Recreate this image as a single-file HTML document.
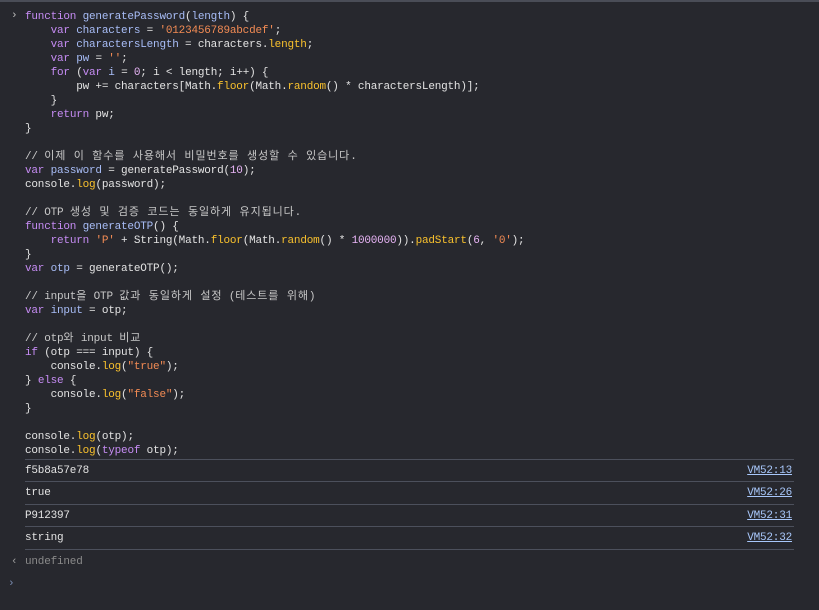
<!DOCTYPE html>
<html><head><meta charset="utf-8"><style>
html,body{margin:0;padding:0;background:#27282e;width:819px;height:610px;overflow:hidden}
body{border-top:2px solid #4a4d57;box-sizing:border-box;font-family:"Liberation Mono","Noto Sans CJK KR",monospace;font-size:11px;letter-spacing:-0.2px;color:#e3e3e3;position:relative}
.code{position:absolute;left:25px;top:8px;white-space:pre;line-height:14px}
.k{color:#c68cf4}.v{color:#a8bdf7}.s{color:#f28b54}.p{color:#f9c12d}.n{color:#e8b4f6}.c{color:#c8c8c8}
.h{letter-spacing:0.9px}
.arrow{position:absolute;left:11px;color:#bbb;font-size:11px}
.row{position:absolute;left:25px;width:769px;height:22px;border-top:1px solid #4c505c;line-height:22px}
.row .l{position:absolute;right:2px;top:0;color:#a8c7fa;text-decoration:underline}
</style></head><body>
<div class="arrow" style="top:8px">&#x203A;</div>
<div class="code"><span class="k">function</span> <span class="v">generatePassword</span>(<span class="v">length</span>) {
    <span class="k">var</span> <span class="v">characters</span> = <span class="s">'0123456789abcdef'</span>;
    <span class="k">var</span> <span class="v">charactersLength</span> = characters.<span class="p">length</span>;
    <span class="k">var</span> <span class="v">pw</span> = <span class="s">''</span>;
    <span class="k">for</span> (<span class="k">var</span> <span class="v">i</span> = <span class="n">0</span>; i &lt; length; i++) {
        pw += characters[Math.<span class="p">floor</span>(Math.<span class="p">random</span>() * charactersLength)];
    }
    <span class="k">return</span> pw;
}

<span class="c">// <span class="h">이제 이 함수를 사용해서 비밀번호를 생성할 수 있습니다</span>.</span>
<span class="k">var</span> <span class="v">password</span> = generatePassword(<span class="n">10</span>);
console.<span class="p">log</span>(password);

<span class="c">// OTP <span class="h">생성 및 검증 코드는 동일하게 유지됩니다</span>.</span>
<span class="k">function</span> <span class="v">generateOTP</span>() {
    <span class="k">return</span> <span class="s">'P'</span> + String(Math.<span class="p">floor</span>(Math.<span class="p">random</span>() * <span class="n">1000000</span>)).<span class="p">padStart</span>(<span class="n">6</span>, <span class="s">'0'</span>);
}
<span class="k">var</span> <span class="v">otp</span> = generateOTP();

<span class="c">// input<span class="h">을</span> OTP <span class="h">값과 동일하게 설정</span> (<span class="h">테스트를 위해</span>)</span>
<span class="k">var</span> <span class="v">input</span> = otp;

<span class="c">// otp<span class="h">와</span> input <span class="h">비교</span></span>
<span class="k">if</span> (otp === input) {
    console.<span class="p">log</span>(<span class="s">"true"</span>);
} <span class="k">else</span> {
    console.<span class="p">log</span>(<span class="s">"false"</span>);
}

console.<span class="p">log</span>(otp);
console.<span class="p">log</span>(<span class="k">typeof</span> otp);</div>
<div class="row" style="top:457px">f5b8a57e78<span class="l">VM52:13</span></div>
<div class="row" style="top:479px">true<span class="l">VM52:26</span></div>
<div class="row" style="top:502px">P912397<span class="l">VM52:31</span></div>
<div class="row" style="top:524px;border-bottom:1px solid #4c505c">string<span class="l">VM52:32</span></div>
<div class="arrow" style="top:554px;color:#999">&#x2039;</div>
<div style="position:absolute;left:25px;top:554px;color:#8a8a8a">undefined</div>
<div class="arrow" style="top:576px;left:8px;color:#7a8cb0">&#x203A;</div>
</body></html>
